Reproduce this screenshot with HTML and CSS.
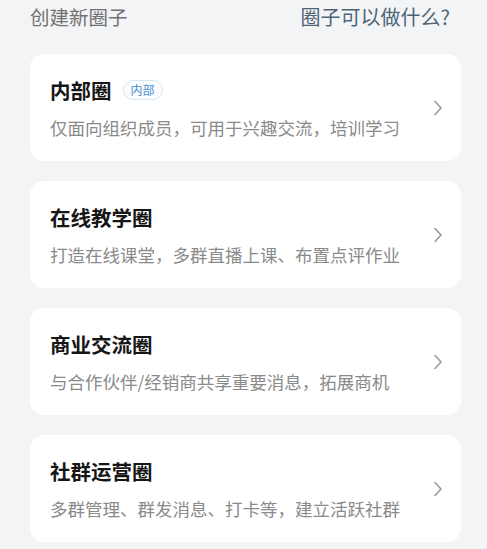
FILE: index.html
```html
<!DOCTYPE html>
<html lang="zh-CN">
<head>
<meta charset="utf-8">
<title>创建新圈子</title>
<link rel="stylesheet" href="styles.css">
</head>
<body>
<div class="page">
  <div class="header">
    <span class="header-title">创建新圈子</span>
    <span class="header-link">圈子可以做什么?</span>
  </div>
  <div class="list">
    <div class="card">
      <div class="card-body">
        <div class="title-row"><span class="title">内部圈</span><span class="badge">内部</span></div>
        <div class="desc">仅面向组织成员，可用于兴趣交流，培训学习</div>
      </div>
      <svg class="chev" viewBox="0 0 10 16" width="10" height="16"><path d="M2 1.5 L8 8 L2 14.5" fill="none" stroke="#9a9a9a" stroke-width="1.6" stroke-linecap="round" stroke-linejoin="round"/></svg>
    </div>
    <div class="card">
      <div class="card-body">
        <div class="title-row"><span class="title">在线教学圈</span></div>
        <div class="desc">打造在线课堂，多群直播上课、布置点评作业</div>
      </div>
      <svg class="chev" viewBox="0 0 10 16" width="10" height="16"><path d="M2 1.5 L8 8 L2 14.5" fill="none" stroke="#9a9a9a" stroke-width="1.6" stroke-linecap="round" stroke-linejoin="round"/></svg>
    </div>
    <div class="card">
      <div class="card-body">
        <div class="title-row"><span class="title">商业交流圈</span></div>
        <div class="desc">与合作伙伴/经销商共享重要消息，拓展商机</div>
      </div>
      <svg class="chev" viewBox="0 0 10 16" width="10" height="16"><path d="M2 1.5 L8 8 L2 14.5" fill="none" stroke="#9a9a9a" stroke-width="1.6" stroke-linecap="round" stroke-linejoin="round"/></svg>
    </div>
    <div class="card">
      <div class="card-body">
        <div class="title-row"><span class="title">社群运营圈</span></div>
        <div class="desc">多群管理、群发消息、打卡等，建立活跃社群</div>
      </div>
      <svg class="chev" viewBox="0 0 10 16" width="10" height="16"><path d="M2 1.5 L8 8 L2 14.5" fill="none" stroke="#9a9a9a" stroke-width="1.6" stroke-linecap="round" stroke-linejoin="round"/></svg>
    </div>
  </div>
</div>
</body>
</html>
```
FILE: styles.css
```css
html, body {
  margin: 0;
  padding: 0;
  background: #f3f4f6;
}
body {
  font-family: "Noto Sans CJK SC", "Noto Sans", sans-serif;
  width: 487px;
  height: 549px;
  overflow: hidden;
}
.page {
  padding: 0 26px 0 30px;
}
.header {
  display: flex;
  justify-content: space-between;
  align-items: center;
  height: 36px;
  padding-right: 11px;
}
.header-title {
  font-size: 19.5px;
  color: #727272;
  line-height: 24px;
  margin-top: -2px;
}
.header-link {
  font-size: 20px;
  color: #4e6577;
  line-height: 24px;
  margin-top: -2px;
}
.list {
  display: flex;
  flex-direction: column;
  gap: 20px;
  margin-top: 18px;
}
.card {
  background: #ffffff;
  border-radius: 14px;
  height: 107px;
  box-sizing: border-box;
  padding: 24px 18px 21px 20px;
  display: flex;
  align-items: center;
}
.card-body {
  flex: 1;
  display: flex;
  flex-direction: column;
  gap: 14px;
}
.title-row {
  display: flex;
  align-items: center;
  height: 24px;
}
.title {
  font-size: 20.5px;
  font-weight: 700;
  color: #161616;
  line-height: 24px;
}
.badge {
  margin-left: 11px;
  font-size: 12px;
  line-height: 18px;
  color: #4a8fd0;
  border: 1px solid #d6e6f4;
  border-radius: 10px;
  padding: 0 7px;
  background: #fafcfe;
}
.desc {
  font-size: 17.5px;
  color: #8a8a8a;
  line-height: 24px;
  white-space: nowrap;
}
.chev {
  flex: none;
  margin-top: -3px;
}
```
